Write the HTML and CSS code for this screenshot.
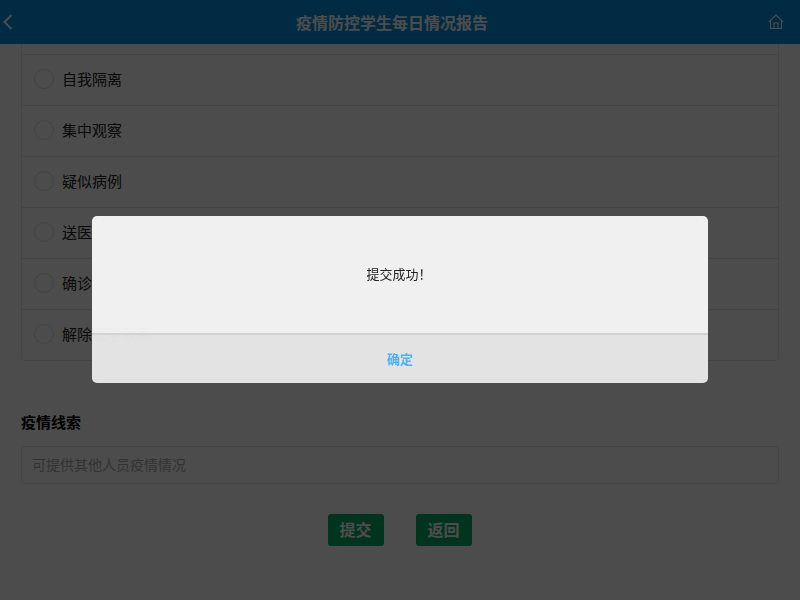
FILE: index.html
```html
<!DOCTYPE html>
<html lang="zh-CN">
<head>
<meta charset="utf-8">
<title>疫情防控学生每日情况报告</title>
<link rel="stylesheet" href="styles.css">
</head>
<body>
<div class="page">
  <header class="topbar">
    <svg class="back" width="10" height="16" viewBox="0 0 10 16"><path d="M8.500 1 1.500 8l7 7" fill="none" stroke="currentColor" stroke-width="2"/></svg>
    <h1 class="title">疫情防控学生每日情况报告</h1>
    <svg class="home" width="16" height="16" viewBox="0 0 16 16"><path d="M.8 8 8 1l7.200 7M2.500 6.500v8h11v-8M6 14.500V9h4v5.500" fill="none" stroke="currentColor" stroke-width="1.100"/></svg>
  </header>
  <main class="content">
    <ul class="options">
      <li class="stub"></li>
      <li class="option"><span class="radio"></span><span class="label">自我隔离</span></li>
      <li class="option"><span class="radio"></span><span class="label">集中观察</span></li>
      <li class="option"><span class="radio"></span><span class="label">疑似病例</span></li>
      <li class="option"><span class="radio"></span><span class="label">送医</span></li>
      <li class="option"><span class="radio"></span><span class="label">确诊</span></li>
      <li class="option"><span class="radio"></span><span class="label">解除医学观察</span></li>
    </ul>
    <h2 class="section">疫情线索</h2>
    <div class="field">可提供其他人员疫情情况</div>
    <div class="actions">
      <button class="btn">提交</button>
      <button class="btn">返回</button>
    </div>
  </main>
</div>
<div class="overlay">
  <div class="dialog">
    <div class="dialog-body">提交成功！</div>
    <div class="dialog-foot">确定</div>
  </div>
</div>
</body>
</html>
```
FILE: styles.css
```css
* { box-sizing: border-box; }
html, body { margin: 0; height: 100%; overflow: hidden; }
body { background: #fff; color: #333; font-family: "Noto Sans CJK SC", "Liberation Sans", sans-serif; }
.page { height: 600px; }
.topbar { height: 44px; background: #0390df; color: #fff; display: flex; align-items: center; justify-content: space-between; padding: 0 16px 0 3px; }
.back { color: #fff; margin-right: 3px; }
.home { color: #fff; }
.title { margin: 0; font-size: 16px; font-weight: 700; color: #fff; line-height: 44px; }
.content { padding: 0 21px; }
.options { list-style: none; margin: 0; padding: 0; border: 1px solid #e4e4e4; border-top: 0; border-radius: 0 0 4px 4px; }
.stub { height: 11px; border-bottom: 1px solid #e4e4e4; }
.option { height: 51px; display: flex; align-items: center; gap: 8px; padding: 0 0 2px 12px; font-size: 15px; color: #222; border-bottom: 1px solid #e4e4e4; }
.option:last-child { border-bottom: 0; height: 50px; }
.radio { width: 20px; height: 20px; border: 1px solid #ddd; border-radius: 50%; }
.label { padding-bottom: 2px; }
.section { margin: 50px 0 0; font-size: 15px; font-weight: 700; color: #000; line-height: 22px; }
.field { margin-top: 13px; height: 38px; border: 1px solid #e4e4e4; border-radius: 4px; padding: 0 10px 2px; font-size: 14px; line-height: 34px; color: #aaa; }
.actions { margin-top: 30px; display: flex; justify-content: center; gap: 32px; }
.btn { width: 56px; height: 32px; padding: 0 1px 1px 0; border: 0; border-radius: 3px; background: #00ad64; color: #fff; font-family: inherit; font-size: 16px; font-weight: 700; line-height: 31px; }
.overlay { position: fixed; inset: 0; background: rgba(0, 0, 0, .7); }
.dialog { position: absolute; left: 92px; top: 216px; width: 616px; height: 167px; border-radius: 5px; overflow: hidden; background: rgba(247, 247, 247, .96); display: flex; flex-direction: column; }
.dialog-body { flex: 1; display: flex; align-items: center; justify-content: center; font-size: 13px; color: #222; padding: 0 2px 2px 0; border-bottom: 2px solid #d2d2d2; }
.dialog-foot { height: 48px; padding-bottom: 2px; display: flex; align-items: center; justify-content: center; font-size: 13px; font-weight: 700; color: #4fb0f5; background: rgba(0, 0, 0, .05); }
```
